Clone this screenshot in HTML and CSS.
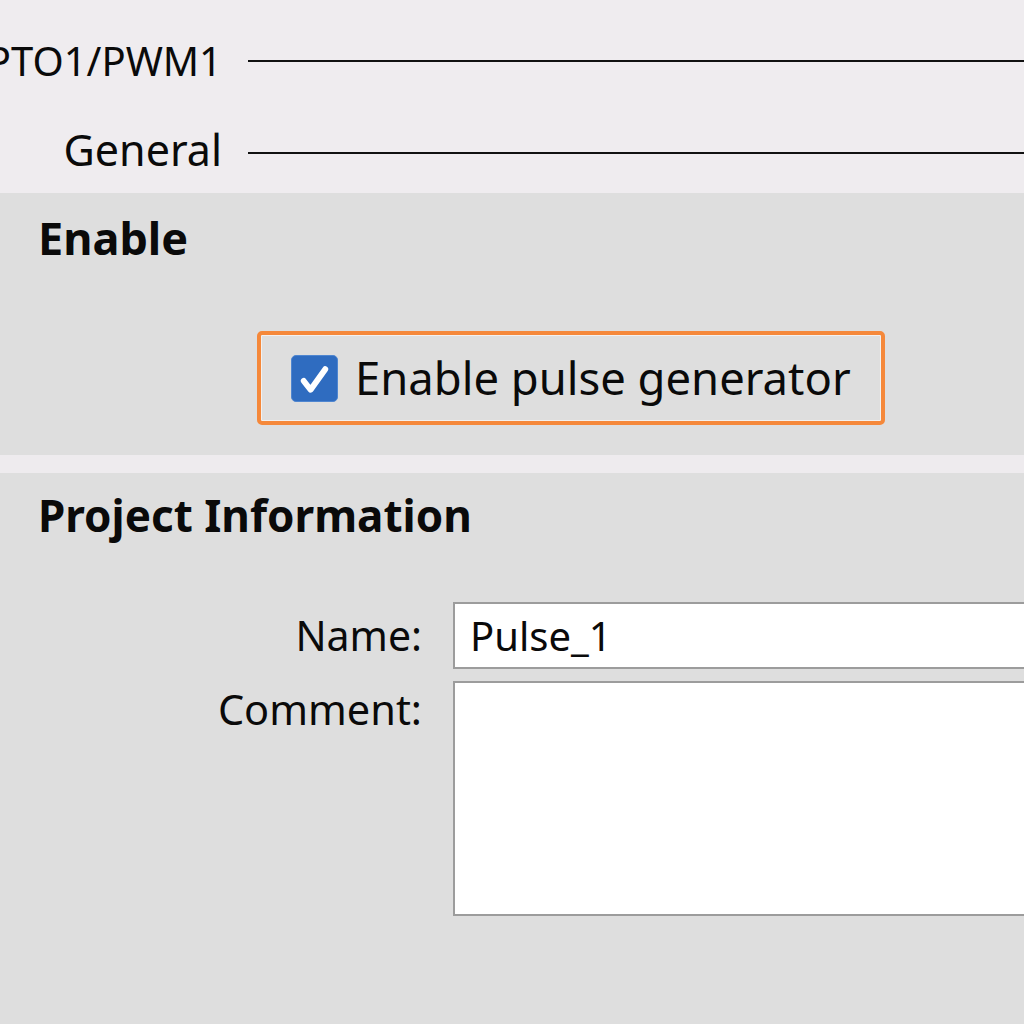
FILE: index.html
```html
<!DOCTYPE html>
<html>
<head>
<meta charset="utf-8">
<link rel="stylesheet" href="styles.css">
</head>
<body>
<div class="page">
  <nav class="nav">
    <div class="nav-row nav-row-first">
      <span class="nav-label nav-label-small">PTO1/PWM1</span>
      <span class="nav-line"></span>
    </div>
    <div class="nav-row">
      <span class="nav-label">General</span>
      <span class="nav-line"></span>
    </div>
  </nav>
  <section class="section section-enable">
    <h2 class="section-title section-title-enable">Enable</h2>
    <div class="highlight">
      <span class="checkbox">
        <svg viewBox="0 0 46 46" width="46" height="46">
          <path d="M12 26 L19 35 L34 14" fill="none" stroke="#fff" stroke-width="6" stroke-linecap="round" stroke-linejoin="round"/>
        </svg>
      </span>
      <span class="check-label">Enable pulse generator</span>
    </div>
  </section>
  <div class="separator"></div>
  <section class="section section-project">
    <h2 class="section-title">Project Information</h2>
    <div class="form">
      <label class="form-label form-label-name">Name:</label>
      <div class="field field-input">Pulse_1</div>
      <label class="form-label form-label-comment">Comment:</label>
      <div class="field field-textarea"></div>
    </div>
  </section>
</div>
</body>
</html>
```
FILE: styles.css
```css
html, body {
  margin: 0;
  padding: 0;
}
body {
  background: #dedede;
  font-family: "Noto Sans", "Open Sans", sans-serif;
  color: #0a0a0a;
  overflow: hidden;
  width: 1024px;
  height: 1024px;
}
.page {
  width: 1024px;
  height: 1024px;
  overflow: hidden;
  display: flex;
  flex-direction: column;
}
.nav {
  background: #efecef;
  height: 193px;
  box-sizing: border-box;
  padding-top: 35px;
  display: flex;
  flex-direction: column;
  gap: 40px;
}
.nav-row {
  display: flex;
  align-items: center;
  height: 52px;
}
.nav-label {
  width: 222px;
  text-align: right;
  font-size: 43px;
  line-height: 52px;
  white-space: nowrap;
  flex: none;
  direction: rtl;
  position: relative;
  top: -3px;
}
.nav-label-small {
  font-size: 40px;
  top: 0;
}
.nav-line {
  flex: 1;
  height: 2px;
  background: #111;
  margin-left: 26px;
}
.section {
  background: #dedede;
  padding-left: 38px;
}
.section-title {
  margin: 0;
  font-weight: 700;
  font-size: 44px;
  line-height: 1;
}
.section-title-enable {
  font-size: 45px;
  padding-top: 2px;
}
.section-enable {
  height: 262px;
  box-sizing: border-box;
  padding-top: 20px;
}
.highlight {
  margin-top: 71px;
  margin-left: 219px;
  width: 628px;
  height: 94px;
  box-sizing: border-box;
  border: 4px solid #f5883a;
  border-radius: 5px;
  box-shadow: inset 0 0 0 1px #f3f0ee;
  display: flex;
  align-items: center;
  padding-left: 30px;
  gap: 17px;
}
.checkbox {
  width: 47px;
  height: 47px;
  box-sizing: border-box;
  background: #2f6cc0;
  border: 1px solid #4f86d0;
  border-radius: 5px;
  display: flex;
  align-items: center;
  justify-content: center;
  flex: none;
}
.checkbox svg {
  display: block;
}
.check-label {
  font-size: 45.4px;
  white-space: nowrap;
  line-height: 1;
}
.separator {
  height: 18px;
  background: #eeebee;
}
.section-project {
  flex: 1;
  padding-top: 20px;
}
.form {
  margin-top: 65px;
  display: grid;
  grid-template-columns: 384px 600px;
  column-gap: 31px;
  row-gap: 12px;
}
.form-label {
  text-align: right;
  font-size: 41px;
  line-height: 1;
  white-space: nowrap;
}
.form-label-name {
  align-self: center;
}
.form-label-comment {
  font-size: 41.5px;
  padding-top: 8px;
}
.field {
  background: #fff;
  border: 2px solid #9c9c9c;
  border-right: none;
  box-sizing: border-box;
}
.field-input {
  height: 67px;
  font-size: 40px;
  line-height: 63px;
  padding-left: 15px;
}
.field-textarea {
  height: 235px;
}
```
